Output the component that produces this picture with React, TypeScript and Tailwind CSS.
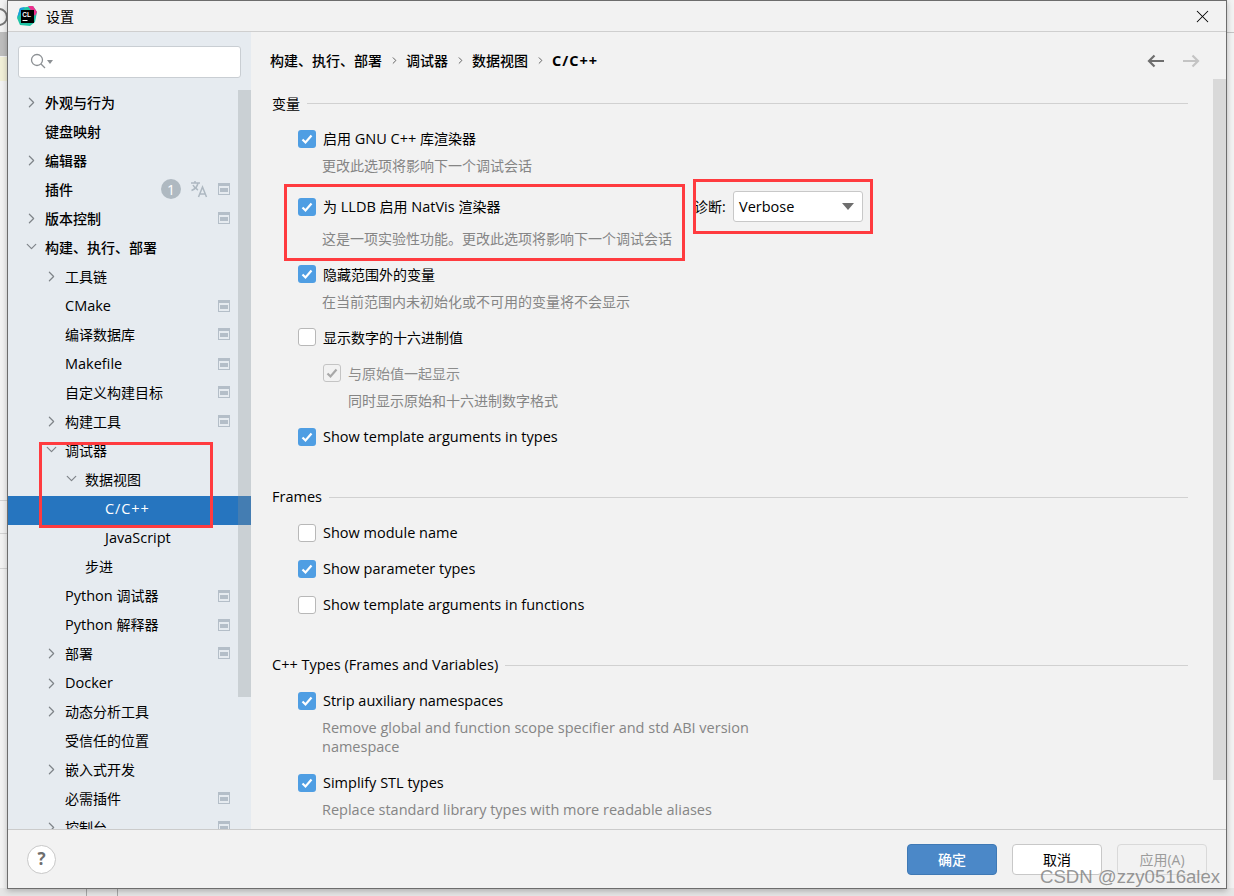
import { ChevronDown, ChevronRight, X } from "lucide-react"

const fontStack = "font-['Open_Sans','Noto_Sans_CJK_SC',sans-serif]"

type NavRow = {
  label: string
  depth: number
  arrow?: "right" | "down"
  project?: boolean
  selected?: boolean
  strong?: boolean
}

const navRows: NavRow[] = [
  { label: "外观与行为", depth: 0, arrow: "right", strong: true },
  { label: "键盘映射", depth: 0, strong: true },
  { label: "编辑器", depth: 0, arrow: "right", strong: true },
  { label: "插件", depth: 0, project: true, strong: true },
  { label: "版本控制", depth: 0, arrow: "right", project: true, strong: true },
  { label: "构建、执行、部署", depth: 0, arrow: "down", strong: true },
  { label: "工具链", depth: 1, arrow: "right" },
  { label: "CMake", depth: 1, project: true },
  { label: "编译数据库", depth: 1, project: true },
  { label: "Makefile", depth: 1, project: true },
  { label: "自定义构建目标", depth: 1, project: true },
  { label: "构建工具", depth: 1, arrow: "right", project: true },
  { label: "调试器", depth: 1, arrow: "down" },
  { label: "数据视图", depth: 2, arrow: "down" },
  { label: "C/C++", depth: 3, selected: true },
  { label: "JavaScript", depth: 3 },
  { label: "步进", depth: 2 },
  { label: "Python 调试器", depth: 1, project: true },
  { label: "Python 解释器", depth: 1, project: true },
  { label: "部署", depth: 1, arrow: "right", project: true },
  { label: "Docker", depth: 1, arrow: "right" },
  { label: "动态分析工具", depth: 1, arrow: "right" },
  { label: "受信任的位置", depth: 1 },
  { label: "嵌入式开发", depth: 1, arrow: "right" },
  { label: "必需插件", depth: 1, project: true },
  { label: "控制台", depth: 1, arrow: "right", project: true },
]

const depthPad = ["pl-[37px]", "pl-[57px]", "pl-[77px]", "pl-[97px]"]
const arrowLeft = ["left-[15px]", "left-[35px]", "left-[55px]", "left-[75px]"]

// latin runs sit a bit wider than the cjk ones in the original ui font
function Txt({ text }: { text: string }) {
  const parts = text.split(/([\u0000-\u024F]+)/).filter(Boolean)
  return (
    <>
      {parts.map((part, i) =>
        /^[\u0000-\u024F]+$/.test(part) ? (
          <span key={i} className="text-[14.5px]">
            {part}
          </span>
        ) : (
          <span key={i}>{part}</span>
        ),
      )}
    </>
  )
}

function ProjectIcon() {
  return (
    <svg width="12" height="12" viewBox="0 0 12 12" className="shrink-0">
      <rect x="0.5" y="0.5" width="11" height="11" fill="none" stroke="#b4bec8" />
      <rect x="0" y="0" width="12" height="3" fill="#b4bec8" />
      <rect x="2" y="5" width="8" height="4" fill="#b4bec8" />
    </svg>
  )
}

function TranslateIcon() {
  return (
    <svg width="18" height="18" viewBox="0 0 18 18" fill="none" stroke="#aeb8c1" strokeWidth="1.5">
      <path d="M1 3h9M5 1v2M8 3c-.6 3-2.6 6-6.5 7.5M3 5c1 2.300 3 4 5 5" />
      <path d="M8.500 17l4-10 4 10M10 14h5" />
    </svg>
  )
}

function NavItem({ row }: { row: NavRow }) {
  const hasLatin = /[A-Za-z]/.test(row.label)
  return (
    <div
      className={`relative flex h-[29px] shrink-0 items-center pr-[21px] text-[14px] ${hasLatin ? "pb-[3px]" : "pb-[5px]"} ${depthPad[row.depth]} ${
        row.selected ? "bg-[#2675bf] tracking-[0.9px] text-white" : "text-black"
      } ${row.strong ? "font-medium" : ""}`}
    >
      {row.arrow === "right" && (
        <ChevronRight size={17} strokeWidth={1.7} className={`absolute text-[#7f8489] ${arrowLeft[row.depth]}`} />
      )}
      {row.arrow === "down" && (
        <ChevronDown size={17} strokeWidth={1.7} className={`absolute -mt-[2px] text-[#7f8489] ${arrowLeft[row.depth]}`} />
      )}
      <span className="flex-1 whitespace-nowrap">
        <Txt text={row.label} />
      </span>
      {row.label === "插件" && (
        <div className="mr-[10px] flex items-center gap-[9px]">
          <span className="flex h-[20px] w-[20px] items-center justify-center rounded-full bg-[#afb9c1] text-[14px] text-white">
            1
          </span>
          <TranslateIcon />
        </div>
      )}
      {row.project && <ProjectIcon />}
    </div>
  )
}

function CheckBox({ checked, disabled }: { checked?: boolean; disabled?: boolean }) {
  const box = disabled
    ? "border border-[#c4c4c4] bg-[#f2f2f2]"
    : checked
      ? "bg-[#4f9ee3]"
      : "border border-[#b8b8b8] bg-white"
  return (
    <span className={`flex h-[18px] w-[18px] shrink-0 items-center justify-center rounded-[3px] ${box}`}>
      {checked && (
        <svg width="12" height="12" viewBox="0 0 12 12" fill="none" stroke={disabled ? "#a8a8a8" : "#ffffff"} strokeWidth="2.200">
          <path d="M1.500 6.500 4.500 9.500 10.500 2.500" />
        </svg>
      )}
    </span>
  )
}

function CheckRow({ label, checked, className }: { label: string; checked?: boolean; className: string }) {
  return (
    <div className={`flex h-[20px] items-center gap-[7px] pl-[26px] text-[14px] whitespace-nowrap text-black ${className}`}>
      <CheckBox checked={checked} />
      <span>
        <Txt text={label} />
      </span>
    </div>
  )
}

function Hint({ text, className }: { text: string; className: string }) {
  return (
    <div className={`text-[14px] leading-[19px] text-[#858585] ${className}`}>
      <Txt text={text} />
    </div>
  )
}

function SectionTitle({ label, className }: { label: string; className: string }) {
  return (
    <div className={`flex h-[20px] items-center gap-[7px] text-[14px] whitespace-nowrap text-black ${className}`}>
      <span>
        <Txt text={label} />
      </span>
      <div className="h-px flex-1 bg-[#d1d1d1]" />
    </div>
  )
}

function Button({ label, kind }: { label: string; kind: "primary" | "plain" | "disabled" }) {
  const look = {
    primary: "border-[#3f79b5] bg-[#4b88c8] text-white font-medium",
    plain: "border-[#c8c8c8] bg-white text-black",
    disabled: "border-[#d9d9d9] bg-[#f2f2f2] text-[#9c9c9c]",
  }[kind]
  return <button className={`h-[31px] w-[90px] rounded-[4px] border text-[14px] ${look}`}>{label}</button>
}

function Sidebar() {
  return (
    <aside className="relative flex w-[243px] shrink-0 flex-col overflow-hidden bg-[#e6ebf0]">
      <div className="px-[10px] pt-[14px] pb-[12px]">
        <div className="flex h-[32px] items-center gap-[1px] rounded-[3px] border border-[#c9ced3] bg-white pl-[10px]">
          <svg width="20" height="20" viewBox="0 0 20 20" fill="none" stroke="#8c9094" strokeWidth="1.300">
            <circle cx="8" cy="8" r="5.500" />
            <path d="m12 12 4 4" />
          </svg>
          <svg width="6" height="4" viewBox="0 0 6 4" className="-ml-[3px]">
            <path d="M0 0h6L3 4z" fill="#8c9094" />
          </svg>
        </div>
      </div>
      <div className="flex flex-col">
        {navRows.map((row) => (
          <NavItem key={row.label} row={row} />
        ))}
      </div>
      <div className="absolute top-[58px] right-0 h-[607px] w-[13px] bg-[#8c9196]/30" />
    </aside>
  )
}

function Crumb() {
  return <ChevronRight size={11} strokeWidth={2} className="mx-[6.5px] text-[#555]" />
}

function Content() {
  return (
    <main className="relative flex min-w-0 flex-1 flex-col overflow-hidden">
      <div className="flex h-[61px] shrink-0 items-center pr-[26px] pb-[4px] pl-[19px] text-[14px] font-medium whitespace-nowrap text-black">
        <span>构建、执行、部署</span>
        <Crumb />
        <span>调试器</span>
        <Crumb />
        <span>数据视图</span>
        <Crumb />
        <span className="text-[14.5px] font-bold tracking-[1px]">C/C++</span>
        <div className="ml-auto flex items-center gap-[17px]">
          <svg width="18" height="14" viewBox="0 0 18 14" fill="none" stroke="#6e6e6e" strokeWidth="2.200">
            <path d="M17 7H2M7.500 1.500 2 7l5.500 5.500" />
          </svg>
          <svg width="18" height="14" viewBox="0 0 18 14" fill="none" stroke="#c4c4c4" strokeWidth="2.200">
            <path d="M1 7h15M10.500 1.500 16 7l-5.500 5.500" />
          </svg>
        </div>
      </div>
      <div className="flex flex-col pr-[38px] pl-[21px]">
        <SectionTitle label="变量" className="" />
        <CheckRow label="启用 GNU C++ 库渲染器" checked className="mt-[16px]" />
        <Hint text="更改此选项将影响下一个调试会话" className="mt-[7px] ml-[50px]" />
        <div className="mt-[16px] flex h-[31px] items-center">
          <CheckRow label="为 LLDB 启用 NatVis 渲染器" checked className="w-[422px]" />
          <span className="w-[39px] text-[14px] whitespace-nowrap text-black">诊断:</span>
          <div className="flex h-[31px] w-[130px] items-center justify-between rounded-[3px] border border-[#c8c8c8] bg-white pr-[8px] pl-[5px] text-[14px] text-black">
            <span>
              <Txt text="Verbose" />
            </span>
            <svg width="12" height="7" viewBox="0 0 12 7">
              <path d="M0 0h12L6 7z" fill="#6e6e6e" />
            </svg>
          </div>
        </div>
        <Hint text="这是一项实验性功能。更改此选项将影响下一个调试会话" className="mt-[7px] ml-[50px]" />
        <CheckRow label="隐藏范围外的变量" checked className="mt-[16px]" />
        <Hint text="在当前范围内未初始化或不可用的变量将不会显示" className="mt-[8px] ml-[50px]" />
        <CheckRow label="显示数字的十六进制值" className="mt-[16px]" />
        <div className="mt-[16px] ml-[51px] flex h-[20px] items-center gap-[7px] text-[14px] text-[#8c8c8c]">
          <CheckBox checked disabled />
          <span>与原始值一起显示</span>
        </div>
        <Hint text="同时显示原始和十六进制数字格式" className="mt-[8px] ml-[76px]" />
        <CheckRow label="Show template arguments in types" checked className="mt-[17px]" />
        <SectionTitle label="Frames" className="mt-[40px]" />
        <CheckRow label="Show module name" className="mt-[16px]" />
        <CheckRow label="Show parameter types" checked className="mt-[16px]" />
        <CheckRow label="Show template arguments in functions" className="mt-[16px]" />
        <SectionTitle label="C++ Types (Frames and Variables)" className="mt-[40px]" />
        <CheckRow label="Strip auxiliary namespaces" checked className="mt-[16px]" />
        <Hint
          text="Remove global and function scope specifier and std ABI version namespace"
          className="mt-[7px] ml-[50px] w-[440px]"
        />
        <CheckRow label="Simplify STL types" checked className="mt-[17px]" />
        <Hint text="Replace standard library types with more readable aliases" className="mt-[7px] ml-[50px]" />
      </div>
      <div className="absolute top-[47px] right-0 h-[701px] w-[13px] bg-[#d9d9d9]" />
    </main>
  )
}

export default function App() {
  return (
    <div className={`relative h-[896px] w-[1234px] overflow-hidden bg-[#f3f3f3] px-[7px] pb-[7px] ${fontStack}`}>
      {/* bits of the IDE behind the dialog */}
      <div className="absolute top-[8px] left-[-10px] h-[18px] w-[18px] rounded-full border-2 border-[#777]" />
      <div className="absolute top-[32px] left-0 h-[24px] w-[7px] bg-[#bdbdbd]" />
      <div className="absolute top-[57px] left-0 h-[24px] w-[7px] bg-[#f2f0d8]" />
      <div className="absolute top-[500px] left-0 h-px w-[7px] bg-[#d4d4d4]" />
      <div className="absolute top-[533px] left-0 h-px w-[7px] bg-[#d4d4d4]" />
      <div className="absolute top-[568px] left-0 h-px w-[7px] bg-[#d4d4d4]" />
      <div className="absolute top-[32px] right-0 h-px w-[7px] bg-[#c4c4c4]" />
      <div className="absolute top-[888px] left-0 h-[8px] w-full bg-[#e6e6e6]" />
      <div className="absolute top-[888px] left-[86px] h-[8px] w-px bg-[#a8a8a8]" />
      <div className="absolute top-[888px] left-[117px] h-[8px] w-px bg-[#a8a8a8]" />

      <div className="relative flex h-[889px] w-[1220px] flex-col border border-[#6d6d6d] bg-[#f2f2f2] shadow-[0_2px_6px_rgba(0,0,0,0.25)]">
        <header className="flex h-[31px] shrink-0 items-center border-b border-[#cfcfcf] pr-[13px] pl-[9px]">
          <svg width="20" height="20" viewBox="0 0 20 20">
            <path d="M3 2 16 0l4 6-2 10-5 4-10-1-3-7z" fill="#1fc4a5" />
            <path d="M11 0h5l4 6-2 4z" fill="#ee2f8d" />
            <path d="M0 12 3 2l5-1z" fill="#1c9be0" />
            <rect x="4" y="4" width="13" height="13" fill="#000" />
            <text x="5.300" y="10.500" fontSize="6.500" fontWeight="700" fill="#fff" fontFamily="Liberation Sans">
              CL
            </text>
            <rect x="5.500" y="14" width="5" height="1" fill="#fff" />
          </svg>
          <span className="ml-[9px] text-[14px] text-black">设置</span>
          <X size={21} strokeWidth={1.2} className="ml-auto text-black" />
        </header>
        <div className="flex min-h-0 flex-1">
          <Sidebar />
          <Content />
        </div>
        <footer className="flex h-[59px] shrink-0 items-center gap-[15px] border-t border-[#cbcbcb] pr-[19px] pl-[19px]">
          <span className="mr-auto flex h-[29px] w-[29px] items-center justify-center rounded-full border border-[#c8c8c8] bg-white text-[17px] font-bold text-[#6e6e6e]">
            ?
          </span>
          <Button label="确定" kind="primary" />
          <Button label="取消" kind="plain" />
          <Button label="应用(A)" kind="disabled" />
        </footer>
      </div>

      {/* annotation boxes drawn over the screenshot */}
      <div className="absolute top-[184px] left-[284px] h-[77px] w-[401px] border-[3px] border-[#ff3b3f]" />
      <div className="absolute top-[179px] left-[693px] h-[55px] w-[180px] border-[3px] border-[#ff3b3f]" />
      <div className="absolute top-[442px] left-[39px] h-[86px] w-[174px] border-[3px] border-[#ff3b3f]" />
      <div className="absolute top-[866px] left-[1040px] font-['Liberation_Sans',sans-serif] text-[18.6px] leading-[22px] whitespace-nowrap text-[#7d7d7d]/80">
        CSDN @zzy0516alex
      </div>
    </div>
  )
}
